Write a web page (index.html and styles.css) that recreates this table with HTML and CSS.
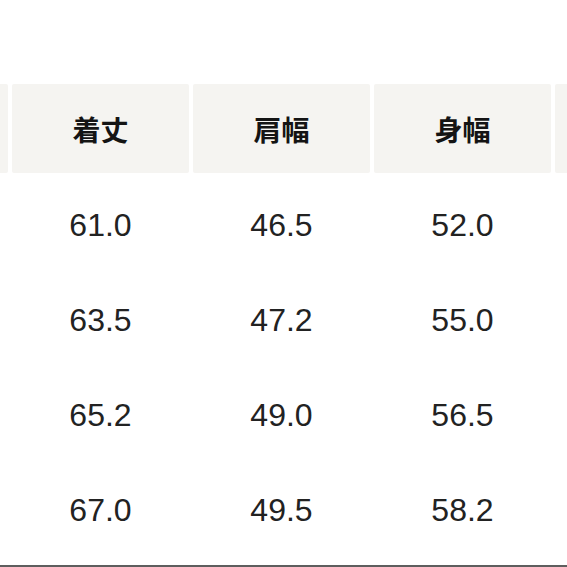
FILE: index.html
```html
<!DOCTYPE html>
<html lang="ja">
<head>
<meta charset="utf-8">
<link rel="stylesheet" href="styles.css">
</head>
<body>
<div class="page">
  <div class="head-row">
    <div class="head-cell"></div>
    <div class="head-cell">着丈</div>
    <div class="head-cell">肩幅</div>
    <div class="head-cell">身幅</div>
    <div class="head-cell"></div>
  </div>
  <div class="body-grid">
    <div class="num">61.0</div><div class="num">46.5</div><div class="num">52.0</div>
    <div class="num">63.5</div><div class="num">47.2</div><div class="num">55.0</div>
    <div class="num">65.2</div><div class="num">49.0</div><div class="num">56.5</div>
    <div class="num">67.0</div><div class="num">49.5</div><div class="num">58.2</div>
  </div>
  <div class="bottom-line"></div>
</div>
</body>
</html>
```
FILE: styles.css
```css
html, body {
  margin: 0;
  padding: 0;
  background: #ffffff;
}
.page {
  width: 567px;
  height: 567px;
  overflow: hidden;
  padding-top: 84px;
  box-sizing: border-box;
}
.head-row {
  display: flex;
  gap: 4px;
  margin-left: -169px;
  height: 89px;
}
.head-cell {
  flex: 0 0 177px;
  background: #f5f4f1;
  border-radius: 2px;
  display: flex;
  align-items: center;
  justify-content: center;
  font-family: "Noto Sans CJK JP", "Noto Sans", sans-serif;
  font-weight: 700;
  font-size: 28px;
  color: #141414;
  line-height: 1;
}
.body-grid {
  display: grid;
  grid-template-columns: repeat(3, 177px);
  column-gap: 4px;
  grid-auto-rows: 95px;
  margin-left: 12px;
  padding-top: 4px;
}
.num {
  display: flex;
  align-items: center;
  justify-content: center;
  font-family: "Liberation Sans", Arial, sans-serif;
  font-size: 32px;
  color: #222222;
  line-height: 1;
}
.bottom-line {
  margin-top: 8px;
  height: 2px;
  background: #5e5e5e;
}
```
